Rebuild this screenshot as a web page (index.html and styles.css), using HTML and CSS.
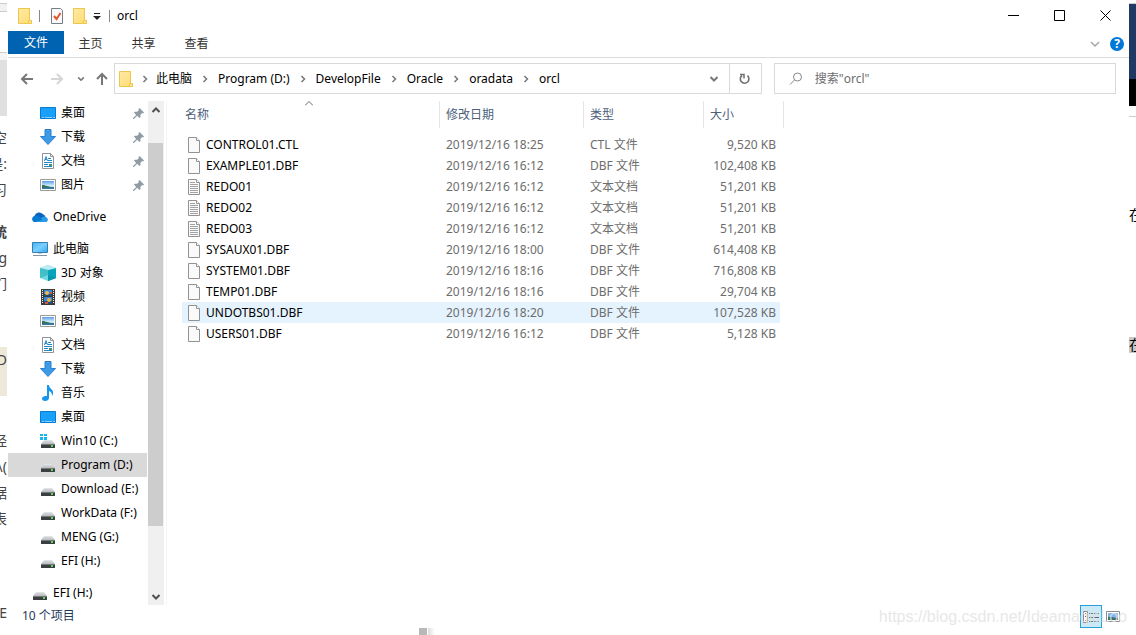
FILE: index.html
```html
<!DOCTYPE html>
<html lang="zh-CN">
<head>
<meta charset="utf-8">
<title>orcl</title>
<link rel="stylesheet" href="styles.css">
</head>
<body>
<svg class="defs" aria-hidden="true">
  <linearGradient id="g-folder" x1="0" y1="0" x2="1" y2="1"><stop offset="0" stop-color="#ffe9a6"/><stop offset="1" stop-color="#ffdc70"/></linearGradient>
  <linearGradient id="g-screen" x1="0" y1="0" x2="1" y2="1"><stop offset="0" stop-color="#3fb4fb"/><stop offset=".5" stop-color="#7bcffd"/><stop offset="1" stop-color="#2ea8f5"/></linearGradient>
  <linearGradient id="g-sky" x1="0" y1="0" x2="0" y2="1"><stop offset="0" stop-color="#5b9ee8"/><stop offset=".6" stop-color="#d5effc"/><stop offset="1" stop-color="#90b8a5"/></linearGradient>
  <linearGradient id="g-drive" x1="0" y1="0" x2="0" y2="1"><stop offset="0" stop-color="#e4e6e8"/><stop offset="1" stop-color="#b6babd"/></linearGradient>
  <symbol id="folder" viewBox="0 0 14 16"><path d="M.5.5h11v12h2v3H.5z" fill="url(#g-folder)" stroke="#ecc64d"/><path d="M11.500.5v12h2v3h-3v-3" fill="#ffe390" stroke="#ecc64d"/></symbol>
  <symbol id="desktop" viewBox="0 0 16 16"><path d="M.5 2.500h15v11H.5z" fill="#18a0fb" stroke="#087ad0"/><path d="M2 12.500h2m1 0h7m1 0h2" stroke="#83d0ff"/></symbol>
  <symbol id="download" viewBox="0 0 16 16"><path d="M5 .5h6v7h4.500L8 15.500.5 7.500H5z" fill="#3d9ae8" stroke="#2b7fcb"/></symbol>
  <symbol id="doc" viewBox="0 0 16 16"><path d="M2.500.5h8l3 3v12h-11z" fill="#fff" stroke="#8c9499"/><path d="M10.500.5v3h3" fill="none" stroke="#8c9499"/><path d="M4 9.500h8M4 11.500h4M4 13.500h8M8 7.500h4M8 5.500h3" stroke="#2388c9"/><path d="m4.500 8 1.500-4.500L7.500 8M5 6.500h2" fill="none" stroke="#2388c9"/><path d="M9 11h3v2H9z" fill="#459375"/></symbol>
  <symbol id="picture" viewBox="0 0 16 16"><path d="M.5 2.500h15v11H.5z" fill="#fff" stroke="#9a9a9a"/><path d="M2 4h12v8H2z" fill="url(#g-sky)"/><path d="M2 8c4 0 5 2 12 2v2H2z" fill="#32705a"/><path d="M2 11c5-1 7 0 12-1v2H2z" fill="#3677a5"/></symbol>
  <symbol id="cloud" viewBox="0 0 16 16"><path d="M2 13a3.500 3.500 0 0 1 .4-6A5 5 0 0 1 11 5.300a4 4 0 0 1 2.500 2.900A2.500 2.500 0 0 1 14 13z" fill="#0a65bd"/><path d="m3.500 13 7-5a3 3 0 0 1 4 .8A2.300 2.300 0 0 1 14 13z" fill="#269de6"/><path d="M2.500 7c3-1 5 0 8 4L2.500 13a3.100 3.100 0 0 1 0-6z" fill="#0879d1"/></symbol>
  <symbol id="pc" viewBox="0 0 16 16"><path d="M.5 1.500h15v10H.5z" fill="url(#g-screen)" stroke="#397fae"/><path d="M6 12h4v1H6z" fill="#c2cbd1"/><path d="M1 14.500h14" stroke="#82949f"/></symbol>
  <symbol id="cube" viewBox="0 0 16 16"><path d="m0 3 8-3 8 3v10l-8 3-8-3z" fill="#70d8e0"/><path d="m8 5 8-2v10l-8 3z" fill="#08a4bb"/><path d="m0 3 8-3 8 3-8 2z" fill="#bcecf2"/><path d="M0 3v10l8-3V5z" fill="#42bfc9"/><path d="m8 10 8 3-8 3z" fill="#0796ad"/></symbol>
  <symbol id="video" viewBox="0 0 16 16"><path d="M1 0h14v16H1z" fill="#3b3b3b"/><path d="M2.500 1v14M13.500 1v14" stroke="#eee" stroke-dasharray="1 1"/><path d="M4 1h8v6H4zM4 8h8v7H4z" fill="#3b86d9"/><path d="M4 5h8v2H4zM4 12h8v3H4z" fill="#234f76"/><circle cx="7" cy="4" r="2" fill="#f0bc45"/><circle cx="9" cy="11" r="2" fill="#efb538"/><path d="M5 13h3v2H5zM10 3h2v2h-2z" fill="#da553e"/></symbol>
  <symbol id="music" viewBox="0 0 16 16"><path d="M7 0h2c0 4 5 4 4 9l-1 2c0-3-1-4-3-5v7c0 2-2 3-4 3s-3-1-3-2.500S4 10.500 7 11z" fill="#1598ec"/></symbol>
  <symbol id="drive" viewBox="0 0 16 16"><path d="M4 7h8l3 4H1z" fill="url(#g-drive)"/><path d="M1 11h14v4H1z" fill="#3b3f42"/><path d="M1 11.500h14" stroke="#777"/><path d="M11 12h2v2h-2z" fill="#52dd53"/></symbol>
  <symbol id="windrive" viewBox="0 0 16 16"><use href="#drive"/><path d="M0 1h3v2H0zM4 1h3v2H4zM0 4h3v3H0zM4 4h3v3H4z" fill="#13b8ef"/></symbol>
  <symbol id="pin" viewBox="0 0 12 12"><path d="m7 0 5 5-1 1-1-.5-2 2 .2 2.500-1 1L4.500 8.500 1 12H0v-1l3.500-3.500L1 5l1-1 2.500.2 2-2L6 1z" fill="#8f9aa3"/></symbol>
  <symbol id="file" viewBox="0 0 12 16"><path d="M.5.5h8l3 3v12H.5z" fill="#fafafa" stroke="#929292"/><path d="M8.500.5v3h3" fill="#fff" stroke="#929292"/></symbol>
  <symbol id="textfile" viewBox="0 0 12 16"><use href="#file"/><path d="M2 3.500h5M2 5.500h8M2 7.500h8M2 9.500h8M2 11.500h8M2 13.500h8" stroke="#a2a2a2"/></symbol>
  <symbol id="right" viewBox="0 0 8 8"><path d="m2.500 1 3 3-3 3" fill="none" stroke="#777" stroke-width="1.500"/></symbol>
  <symbol id="down" viewBox="0 0 10 10"><path d="m1.500 3 3.500 3.500L8.500 3" fill="none" stroke="currentColor" stroke-width="2"/></symbol>
  <symbol id="arrow" viewBox="0 0 14 14"><path d="M13 7H2m5-5L2 7l5 5" fill="none" stroke="currentColor" stroke-width="2"/></symbol>
</svg>
<div class="screen">
  <aside class="behind behind-left" aria-hidden="true">
    <div class="strip-top"></div><div class="strip-mid"></div><div class="strip-tool"></div>
    <p class="frag gap-sm">空</p><p class="frag">是:</p><p class="frag">习</p>
    <p class="frag bold">统</p><p class="frag">g</p><p class="frag">们</p>
    <p class="frag code">(D</p>
    <p class="frag gap-md">经</p><p class="frag">\(</p><p class="frag">据</p><p class="frag">表</p>
    <p class="frag last">LE</p>
  </aside>
  <main class="window">
    <header class="titlebar">
      <svg class="i-folder"><use href="#folder"/></svg><i class="bar"></i>
      <button class="plain" aria-label="属性"><svg width="12" height="16" viewBox="0 0 12 16"><path d="M.5.5h9l2 2v13H.5z" fill="#fafafa" stroke="#777f86"/><path d="m3 8 2.500 3L9.500 5" fill="none" stroke="#e4572e" stroke-width="2"/></svg></button>
      <button class="plain" aria-label="新建文件夹"><svg class="i-folder"><use href="#folder"/></svg></button>
      <button class="plain more" aria-label="自定义快速访问工具栏"><svg width="8" height="8" viewBox="0 0 8 8"><path d="M1 1.500h6" stroke="#222"/><path d="M0 4h8L4 8z" fill="#222"/></svg></button>
      <i class="bar"></i><h1 class="title">orcl</h1>
      <div class="controls">
        <button class="ctl" aria-label="最小化"><svg width="11" height="11"><path d="M0 5.500h11" stroke="#000"/></svg></button>
        <button class="ctl" aria-label="最大化"><svg width="11" height="11"><path d="M.5.5h10v10H.5z" fill="none" stroke="#000"/></svg></button>
        <button class="ctl" aria-label="关闭"><svg width="11" height="11"><path d="m.5.5 10 10m0-10-10 10" stroke="#000"/></svg></button>
      </div>
    </header>
    <div class="ribbon">
      <button class="tab file">文件</button><button class="tab">主页</button><button class="tab">共享</button><button class="tab">查看</button>
      <div class="ribbon-end">
        <button class="plain" aria-label="展开功能区"><svg width="10" height="10" viewBox="0 0 10 10"><path d="m1 3 4 4 4-4" fill="none" stroke="#a5a5a5" stroke-width="1.500"/></svg></button>
        <button class="help" aria-label="帮助">?</button>
      </div>
    </div>
    <div class="address">
      <button class="plain nav" aria-label="后退"><svg class="i14"><use href="#arrow"/></svg></button>
      <button class="plain nav off" aria-label="前进"><svg class="i14 flip"><use href="#arrow"/></svg></button>
      <button class="plain recent" aria-label="最近"><svg class="i8"><use href="#down"/></svg></button>
      <button class="plain up" aria-label="上移"><svg class="i14 turn"><use href="#arrow"/></svg></button>
      <div class="path">
        <svg class="i-folder"><use href="#folder"/></svg>
        <span class="sep first"><svg class="i8"><use href="#right"/></svg></span><a href="#">此电脑</a>
        <span class="sep"><svg class="i8"><use href="#right"/></svg></span><a href="#">Program (D:)</a>
        <span class="sep"><svg class="i8"><use href="#right"/></svg></span><a href="#">DevelopFile</a>
        <span class="sep"><svg class="i8"><use href="#right"/></svg></span><a href="#">Oracle</a>
        <span class="sep"><svg class="i8"><use href="#right"/></svg></span><a href="#">oradata</a>
        <span class="sep"><svg class="i8"><use href="#right"/></svg></span><a href="#">orcl</a>
        <button class="plain drop" aria-label="以前的位置"><svg class="i10"><use href="#down"/></svg></button>
        <button class="plain refresh" aria-label="刷新"><svg width="12" height="12" viewBox="0 0 12 12"><path d="M3 2.500a4.300 4.300 0 1 0 5.500.2" fill="none" stroke="#707070" stroke-width="1.600"/><path d="M1 1.500h4v4" fill="none" stroke="#707070" stroke-width="1.500"/></svg></button>
      </div>
      <label class="search"><svg width="14" height="14" viewBox="0 0 14 14"><circle cx="8.500" cy="5" r="4" fill="none" stroke="#888"/><path d="M5.500 8 1 12.500" stroke="#888"/></svg><input type="text" aria-label="搜索" placeholder='搜索"orcl"'></label>
    </div>
    <div class="content">
      <nav class="tree">
        <div class="group">
          <a class="node" href="#"><svg class="i16"><use href="#desktop"/></svg>桌面<svg class="pin"><use href="#pin"/></svg></a>
          <a class="node" href="#"><svg class="i16"><use href="#download"/></svg>下载<svg class="pin"><use href="#pin"/></svg></a>
          <a class="node" href="#"><svg class="i16"><use href="#doc"/></svg>文档<svg class="pin"><use href="#pin"/></svg></a>
          <a class="node" href="#"><svg class="i16"><use href="#picture"/></svg>图片<svg class="pin"><use href="#pin"/></svg></a>
        </div>
        <div class="group"><a class="node root" href="#"><svg class="i16"><use href="#cloud"/></svg>OneDrive</a></div>
        <div class="group">
          <a class="node root" href="#"><svg class="i16"><use href="#pc"/></svg>此电脑</a>
          <a class="node" href="#"><svg class="i16"><use href="#cube"/></svg>3D 对象</a>
          <a class="node" href="#"><svg class="i16"><use href="#video"/></svg>视频</a>
          <a class="node" href="#"><svg class="i16"><use href="#picture"/></svg>图片</a>
          <a class="node" href="#"><svg class="i16"><use href="#doc"/></svg>文档</a>
          <a class="node" href="#"><svg class="i16"><use href="#download"/></svg>下载</a>
          <a class="node" href="#"><svg class="i16"><use href="#music"/></svg>音乐</a>
          <a class="node" href="#"><svg class="i16"><use href="#desktop"/></svg>桌面</a>
          <a class="node" href="#"><svg class="i16"><use href="#windrive"/></svg>Win10 (C:)</a>
          <a class="node selected" href="#"><svg class="i16"><use href="#drive"/></svg>Program (D:)</a>
          <a class="node" href="#"><svg class="i16"><use href="#drive"/></svg>Download (E:)</a>
          <a class="node" href="#"><svg class="i16"><use href="#drive"/></svg>WorkData (F:)</a>
          <a class="node" href="#"><svg class="i16"><use href="#drive"/></svg>MENG (G:)</a>
          <a class="node" href="#"><svg class="i16"><use href="#drive"/></svg>EFI (H:)</a>
        </div>
        <div class="group"><a class="node root" href="#"><svg class="i16"><use href="#drive"/></svg>EFI (H:)</a></div>
      </nav>
      <div class="scroll">
        <button class="plain" aria-label="向上滚动"><svg class="i10 over"><use href="#down"/></svg></button>
        <div class="track"><div class="thumb"></div></div>
        <button class="plain" aria-label="向下滚动"><svg class="i10"><use href="#down"/></svg></button>
      </div>
      <section class="list">
        <table class="files">
          <colgroup><col class="c-name"><col class="c-date"><col class="c-type"><col class="c-size"><col class="c-end"></colgroup>
          <thead><tr>
            <th class="h-name"><div class="head">名称<svg class="sort" viewBox="0 0 8 5"><path d="m0 4.500 4-4 4 4" fill="none" stroke="#666"/></svg></div></th>
            <th><div class="head">修改日期</div></th><th><div class="head">类型</div></th><th colspan="2"><div class="head">大小</div></th>
          </tr></thead>
          <tbody>
            <tr><td><span class="name"><svg class="i-file"><use href="#file"/></svg>CONTROL01.CTL</span></td><td>2019/12/16 18:25</td><td>CTL 文件</td><td>9,520 KB</td></tr>
            <tr><td><span class="name"><svg class="i-file"><use href="#file"/></svg>EXAMPLE01.DBF</span></td><td>2019/12/16 16:12</td><td>DBF 文件</td><td>102,408 KB</td></tr>
            <tr><td><span class="name"><svg class="i-file"><use href="#textfile"/></svg>REDO01</span></td><td>2019/12/16 16:12</td><td>文本文档</td><td>51,201 KB</td></tr>
            <tr><td><span class="name"><svg class="i-file"><use href="#textfile"/></svg>REDO02</span></td><td>2019/12/16 16:12</td><td>文本文档</td><td>51,201 KB</td></tr>
            <tr><td><span class="name"><svg class="i-file"><use href="#textfile"/></svg>REDO03</span></td><td>2019/12/16 16:12</td><td>文本文档</td><td>51,201 KB</td></tr>
            <tr><td><span class="name"><svg class="i-file"><use href="#file"/></svg>SYSAUX01.DBF</span></td><td>2019/12/16 18:00</td><td>DBF 文件</td><td>614,408 KB</td></tr>
            <tr><td><span class="name"><svg class="i-file"><use href="#file"/></svg>SYSTEM01.DBF</span></td><td>2019/12/16 18:16</td><td>DBF 文件</td><td>716,808 KB</td></tr>
            <tr><td><span class="name"><svg class="i-file"><use href="#file"/></svg>TEMP01.DBF</span></td><td>2019/12/16 18:16</td><td>DBF 文件</td><td>29,704 KB</td></tr>
            <tr class="hot"><td><span class="name"><svg class="i-file"><use href="#file"/></svg>UNDOTBS01.DBF</span></td><td>2019/12/16 18:20</td><td>DBF 文件</td><td>107,528 KB</td></tr>
            <tr><td><span class="name"><svg class="i-file"><use href="#file"/></svg>USERS01.DBF</span></td><td>2019/12/16 16:12</td><td>DBF 文件</td><td>5,128 KB</td></tr>
          </tbody>
        </table>
      </section>
    </div>
    <footer class="status">
      <span class="count">10 个项目</span>
      <div class="views">
        <button class="view on" aria-label="详细信息"><svg width="16" height="12" viewBox="0 0 16 12"><path d="M.5.5h4v11h-4z" fill="#fff" stroke="#8c8c8c"/><path d="M2 2.500h1M2 5.500h1" stroke="#55a"/><path d="M2 9.500h1" stroke="#c22"/><path d="M6 2.500h4m1 0h5M6 6.500h4m1 0h5M6 10.500h4m1 0h5" stroke="#666"/></svg></button>
        <button class="view" aria-label="大缩略图"><svg width="14" height="12" viewBox="0 0 14 12"><path d="M.5.5h13v10H.5z" fill="#fff" stroke="#8c8c8c"/><path d="M2 2h10v7H2z" fill="#83b4f0"/><path d="M2 6c4-1 6 1 10 1v2H2z" fill="#3c6e68"/></svg></button>
      </div>
    </footer>
    <div class="below"><i class="block"></i><i class="fade"></i></div>
  </main>
  <aside class="behind behind-right" aria-hidden="true">
    <div class="navy"></div><div class="black"></div><div class="rule"></div>
    <p class="edge">在</p><p class="edge marked">在</p>
  </aside>
  <div class="watermark">https://blog.csdn.net/IdeamagicLoo</div>
</div>
</body>
</html>
```
FILE: styles.css
```css
* { box-sizing: border-box; }
body { margin: 0; background: #fff; color: #000; font: 12px/16px "Noto Sans", "Noto Sans CJK SC", sans-serif; }
a { color: inherit; text-decoration: none; }
button { font: inherit; color: inherit; border: 0; padding: 0; background: none; }
p, h1 { margin: 0; }
svg { display: block; flex: none; }
.defs { position: absolute; width: 0; height: 0; }
.screen { position: relative; display: flex; min-height: 100vh; overflow: hidden; }
.window { flex: 1; min-width: 0; display: flex; flex-direction: column; }
.plain { display: flex; align-items: center; justify-content: center; }
.i16 { width: 16px; height: 16px; }
.i14 { width: 14px; height: 14px; }
.i10 { width: 10px; height: 10px; }
.i8 { width: 8px; height: 8px; }
.i-folder { width: 14px; height: 16px; }
.i-file { width: 12px; height: 16px; }
.flip { transform: rotate(180deg); }
.over { transform: rotate(180deg); }
.turn { transform: rotate(90deg); }

.behind { flex: none; overflow: hidden; color: #444; }
.behind-left { width: 8px; border-right: 1px solid #fff; }
.strip-top { height: 9px; margin-top: 3px; background: #f2f2f2; border: solid #ccc; border-width: 1px 0; }
.strip-mid { height: 8px; margin-top: 40px; background: #f5f5f5; border-top: 1px solid #ccc; }
.strip-tool { height: 56px; background: #e0e0e0; }
.frag { display: flex; justify-content: flex-end; height: 26px; font-size: 14px; line-height: 26px; white-space: nowrap; }
.gap-sm { margin-top: 9px; }
.bold { margin-top: 16px; font-weight: bold; }
.code { height: 49px; margin-top: 50px; padding-bottom: 20px; background: #ece9d8; }
.gap-md { margin-top: 32px; }
.last { margin-top: 68px; }
.behind-right { width: 7px; }
.navy { height: 76px; margin-top: 3px; border-top: 1px solid #ccc; background: #1f3864; }
.black { height: 27px; background: #000; }
.rule { height: 11px; border-bottom: 1px solid #ccc; }
.edge { height: 16px; margin-top: 90px; font-size: 14px; color: #000; }
.marked { margin-top: 114px; background: #c8c8c8; }

.titlebar { display: flex; align-items: center; height: 31px; padding-left: 10px; }
.titlebar > .plain { margin-right: 10px; }
.titlebar > .more { margin-left: -4px; }
.bar { width: 1px; height: 12px; margin: 0 11px 0 7px; background: #888; }
.titlebar .plain + .bar { margin: 0 7px 0 -2px; }
.title { font-size: 12px; font-weight: 400; }
.controls { display: flex; align-self: stretch; margin-left: auto; padding-right: 1px; }
.ctl { display: flex; align-items: center; justify-content: center; width: 46px; }

.ribbon { display: flex; height: 27px; border-bottom: 1px solid #dadbdc; }
.tab { width: 53px; height: 25px; color: #333; }
.file { width: 56px; height: 23px; background: #0063b1; color: #fff; }
.ribbon-end { display: flex; align-items: center; gap: 10px; margin-left: auto; padding-right: 5px; }
.help { width: 14px; height: 14px; border-radius: 50%; background: #0078d7; color: #fff; font-weight: bold; line-height: 14px; }

.address { display: flex; align-items: center; height: 43px; padding: 0 13px 2px 4px; color: #777; }
.nav { width: 30px; }
.off { color: #d5d5d5; }
.recent { width: 17px; }
.up { width: 25px; }
.path { flex: 663; display: flex; align-items: center; height: 31px; padding-left: 4px; border: 1px solid #d9d9d9; }
.path a { color: #000; white-space: nowrap; }
.sep { display: flex; justify-content: center; width: 26px; }
.first { width: 23px; }
.drop { width: 30px; margin-left: auto; }
.refresh { align-self: stretch; width: 32px; border-left: 1px solid #d9d9d9; }
.search { flex: 337; display: flex; align-items: center; gap: 12px; height: 31px; margin-left: 12px; padding-left: 14px; border: 1px solid #d9d9d9; }
.search input { flex: 1; min-width: 0; border: 0; outline: 0; padding: 0; font: inherit; color: #666; background: none; }
.search input::placeholder { color: #6d6d6d; opacity: 1; }

.content { display: flex; }
.tree { width: 140px; padding-right: 1px; }
.group + .group { margin-top: 8px; }
.node { display: flex; align-items: center; gap: 5px; height: 24px; padding-left: 32px; white-space: nowrap; }
.root { padding-left: 24px; }
.selected { background: #d9d9d9; }
.pin { width: 11px; height: 11px; margin-left: auto; margin-right: 3px; }
.scroll { display: flex; flex-direction: column; width: 16px; background: #f0f0f0; color: #505050; }
.scroll .plain { height: 17px; }
.track { flex: 1; padding-top: 25px; }
.thumb { width: 15px; height: 86%; background: #cdcdcd; }
.list { flex: 1; min-width: 0; margin-left: 2px; padding-left: 15px; border-left: 1px solid #f5f5f5; }
.files { width: 602px; border-collapse: collapse; table-layout: fixed; }
.c-name { width: 258px; }
.c-date { width: 144px; }
.c-type { width: 120px; }
.c-size { width: 76px; }
.c-end { width: 4px; }
.files th { padding: 0 0 6px; font-weight: 400; text-align: left; color: #4c607a; }
.head { position: relative; height: 27px; padding-left: 6px; line-height: 27px; border-right: 1px solid #e5e5e5; }
.h-name .head { padding-left: 3px; }
.sort { position: absolute; top: 0; left: 48%; width: 8px; height: 5px; }
.files td { height: 21px; padding: 0 0 0 6px; color: #6d6d6d; white-space: nowrap; }
.files td:first-child { color: #000; }
.files td:nth-child(4) { padding: 0 4px 0 0; text-align: right; }
.name { display: flex; align-items: center; gap: 6px; }
.hot td { background: #e5f3ff; }

.status { display: flex; height: 23px; padding: 0 5px 0 14px; color: #1e395b; }
.count { padding-right: 10px; line-height: 22px; }
.views { display: flex; margin-left: auto; }
.view { display: flex; align-items: center; justify-content: center; width: 22px; }
.on { border: 1px solid #26a0da; background: #cbe8f6; }
.below { display: flex; flex: 1; padding-left: 411px; }
.block { width: 8px; height: 7px; background: #b8b8b8; }
.fade { width: 7px; height: 7px; margin-left: 1px; background: linear-gradient(90deg, #ddd, #fff); }
.watermark { position: absolute; right: 9px; bottom: 9px; font: 16px/18px "Liberation Sans", Arial, sans-serif; color: rgba(225, 225, 225, .8); }
```
